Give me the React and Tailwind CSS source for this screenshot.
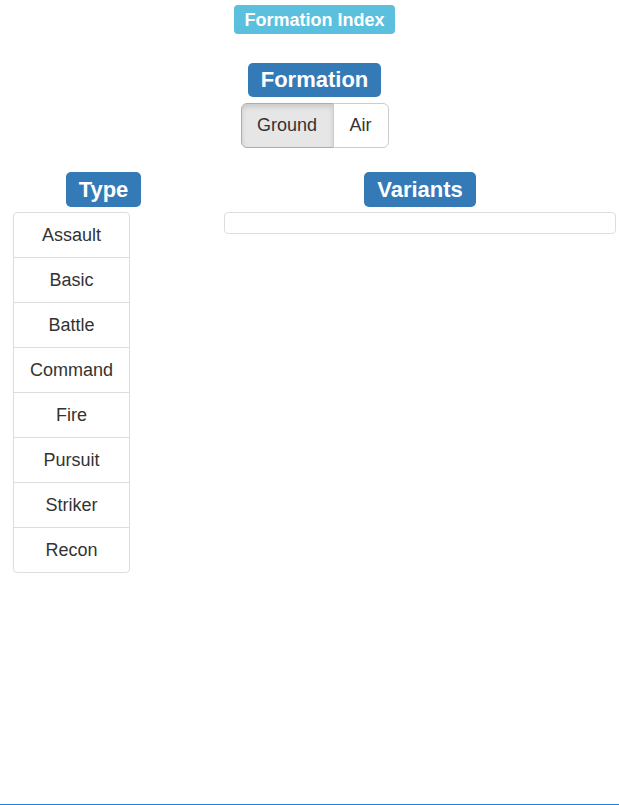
import React from 'react';

const types = ['Assault', 'Basic', 'Battle', 'Command', 'Fire', 'Pursuit', 'Striker', 'Recon'];

const Label = ({ children }) => (
  <span className="inline-flex h-[35px] items-center rounded-[5px] bg-[#337ab7] px-[13px] text-[22px] font-bold leading-none text-white">
    {children}
  </span>
);

export default function App() {
  return (
    <div className="relative flex min-h-[805px] w-full flex-col bg-white text-[#333] [font-family:'Liberation_Sans',Arial,sans-serif]">
      <div className="flex flex-col items-center pl-[10px]">
        <span className="mt-[5px] inline-flex h-[29px] items-center rounded-[4px] bg-[#5bc0de] px-[10px] text-[18px] font-bold leading-none text-white">
          Formation Index
        </span>
        <span className="mt-[29px] inline-flex h-[34px] items-center rounded-[5px] bg-[#337ab7] px-[13px] text-[22px] font-bold leading-none text-white">
          Formation
        </span>
        <div className="mt-[6px] flex h-[45px] text-[18px]">
          <button className="w-[93px] rounded-l-[6px] border border-[#adadad] bg-[#e6e6e6] text-[#333] shadow-[inset_0_3px_5px_rgba(0,0,0,0.125)]">
            Ground
          </button>
          <button className="-ml-px w-[56px] rounded-r-[6px] border border-[#ccc] bg-white text-[#333]">
            Air
          </button>
        </div>
      </div>

      <div className="mt-[24px] flex">
        <div className="flex w-[207px] flex-col">
          <div className="flex justify-center">
            <Label>Type</Label>
          </div>
          <ul className="ml-[13px] mt-[5px] w-[117px] rounded-[4px] border border-[#ddd] text-[18px]">
            {types.map((t, i) => (
              <li
                key={t}
                className={`flex items-center justify-center ${i > 0 ? 'h-[45px] border-t border-[#ddd]' : 'h-[44px]'}`}
              >
                {t}
              </li>
            ))}
          </ul>
        </div>
        <div className="ml-[17px] flex w-[392px] flex-col">
          <div className="flex justify-center">
            <Label>Variants</Label>
          </div>
          <div className="mt-[5px] h-[22px] rounded-[4px] border border-[#ddd]" />
        </div>
      </div>

      <div className="absolute bottom-0 left-0 h-px w-full bg-[#1a80d9]" />
    </div>
  );
}
